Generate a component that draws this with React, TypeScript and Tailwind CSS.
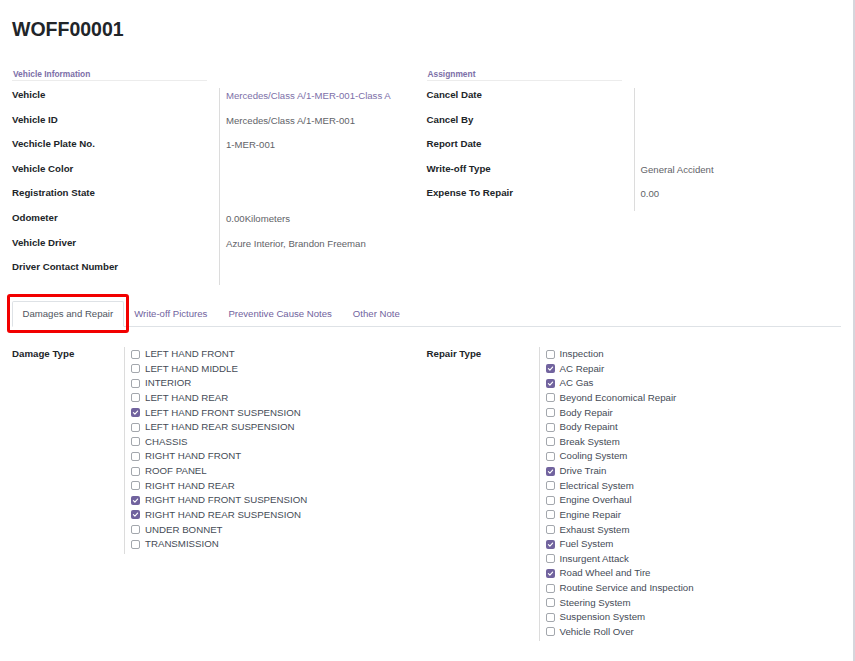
import React from "react";

const leftRows: [string, string, boolean][] = [
  ["Vehicle", "Mercedes/Class A/1-MER-001-Class A", true],
  ["Vehicle ID", "Mercedes/Class A/1-MER-001", false],
  ["Vechicle Plate No.", "1-MER-001", false],
  ["Vehicle Color", "", false],
  ["Registration State", "", false],
  ["Odometer", "0.00Kilometers", false],
  ["Vehicle Driver", "Azure Interior, Brandon Freeman", false],
  ["Driver Contact Number", "", false],
];

const rightRows: [string, string, boolean][] = [
  ["Cancel Date", "", false],
  ["Cancel By", "", false],
  ["Report Date", "", false],
  ["Write-off Type", "General Accident", false],
  ["Expense To Repair", "0.00", false],
];

const damage: [string, boolean][] = [
  ["LEFT HAND FRONT", false],
  ["LEFT HAND MIDDLE", false],
  ["INTERIOR", false],
  ["LEFT HAND REAR", false],
  ["LEFT HAND FRONT SUSPENSION", true],
  ["LEFT HAND REAR SUSPENSION", false],
  ["CHASSIS", false],
  ["RIGHT HAND FRONT", false],
  ["ROOF PANEL", false],
  ["RIGHT HAND REAR", false],
  ["RIGHT HAND FRONT SUSPENSION", true],
  ["RIGHT HAND REAR SUSPENSION", true],
  ["UNDER BONNET", false],
  ["TRANSMISSION", false],
];

const repair: [string, boolean][] = [
  ["Inspection", false],
  ["AC Repair", true],
  ["AC Gas", true],
  ["Beyond Economical Repair", false],
  ["Body Repair", false],
  ["Body Repaint", false],
  ["Break System", false],
  ["Cooling System", false],
  ["Drive Train", true],
  ["Electrical System", false],
  ["Engine Overhaul", false],
  ["Engine Repair", false],
  ["Exhaust System", false],
  ["Fuel System", true],
  ["Insurgent Attack", false],
  ["Road Wheel and Tire", true],
  ["Routine Service and Inspection", false],
  ["Steering System", false],
  ["Suspension System", false],
  ["Vehicle Roll Over", false],
];

function Group({ title, rows }: { title: string; rows: [string, string, boolean][] }) {
  return (
    <div>
      <div className="w-[195px] h-[13px] border-b border-[#ececec] pl-[1px] text-[8.4px] leading-[12px] font-bold text-[#7c6fa8]">
        {title}
      </div>
      <div className="mt-[7px] flex">
        <div className="w-[207px] shrink-0">
          {rows.map(([l]) => (
            <div key={l} className="h-[24.6px] pt-[1px] text-[9.7px] leading-[12px] font-bold text-[#212529] whitespace-nowrap">
              {l}
            </div>
          ))}
        </div>
        <div className="border-l border-[#dcdcdc] pl-[6px] flex-1">
          {rows.map(([l, v, link]) => (
            <div
              key={l}
              className={
                "h-[24.6px] pt-[2px] text-[9.6px] leading-[12px] whitespace-nowrap " +
                (link ? "text-[#7c6fa8]" : "text-[#5f6368]")
              }
            >
              {v}
            </div>
          ))}
        </div>
      </div>
    </div>
  );
}

function Check({ checked }: { checked: boolean }) {
  return checked ? (
    <span className="w-[9px] h-[9px] rounded-[2px] bg-[#71639e] flex items-center justify-center shrink-0">
      <svg width="7" height="7" viewBox="0 0 8 8">
        <polyline points="1.6,4.2 3.3,5.8 6.4,2.3" fill="none" stroke="white" strokeWidth="1.3" strokeLinecap="round" strokeLinejoin="round" />
      </svg>
    </span>
  ) : (
    <span className="w-[9px] h-[9px] rounded-[2px] border border-[#a3a7ad] bg-white shrink-0" />
  );
}

function CheckGroup({ label, items }: { label: string; items: [string, boolean][] }) {
  return (
    <div className="flex items-start">
      <div className="w-[112px] shrink-0 text-[9.7px] leading-[12px] font-bold text-[#212529] pt-[1px]">{label}</div>
      <div className="border-l border-[#dcdcdc] pl-[6px] pb-[2px]">
        {items.map(([t, c]) => (
          <div key={t} className="h-[14.63px] flex items-center gap-[5px]">
            <Check checked={c} />
            <span className="text-[9.7px] leading-[12px] text-[#454b56] whitespace-nowrap">{t}</span>
          </div>
        ))}
      </div>
    </div>
  );
}

export default function App() {
  return (
    <div className="w-[855px] h-[661px] flex bg-white overflow-hidden font-['Liberation_Sans',Arial,sans-serif]">
      <div className="flex-1 relative px-[12px]">
        <h1 className="pt-[17px] text-[19.5px] leading-[24px] font-bold text-[#212529]">WOFF00001</h1>
        <div className="mt-[27px] grid grid-cols-2 items-start">
          <Group title="Vehicle Information" rows={leftRows} />
          <Group title="Assignment" rows={rightRows} />
        </div>
        <div className="mt-[16px] flex border-b border-[#dee2e6] text-[9.6px] leading-[12px]">
          <div className="-mb-px px-[9.5px] pt-[6px] pb-[6px] border border-[#dee2e6] border-b-white bg-white text-[#4f5560] rounded-t-[2px]">
            Damages and Repair
          </div>
          <div className="-mb-px px-[9.5px] pt-[6px] pb-[6px] border border-transparent text-[#71639e]">Write-off Pictures</div>
          <div className="-mb-px px-[9.5px] pt-[6px] pb-[6px] border border-transparent text-[#71639e]">Preventive Cause Notes</div>
          <div className="-mb-px px-[9.5px] pt-[6px] pb-[6px] border border-transparent text-[#71639e]">Other Note</div>
        </div>
        <div className="mt-[20px] grid grid-cols-2 items-start">
          <CheckGroup label="Damage Type" items={damage} />
          <CheckGroup label="Repair Type" items={repair} />
        </div>
        <div className="absolute left-[7px] top-[294px] w-[122px] h-[39px] border-[3px] border-[#f20000] rounded-[3px]" />
      </div>
      <div className="w-[2px] bg-[#d6d6dc]" />
    </div>
  );
}
